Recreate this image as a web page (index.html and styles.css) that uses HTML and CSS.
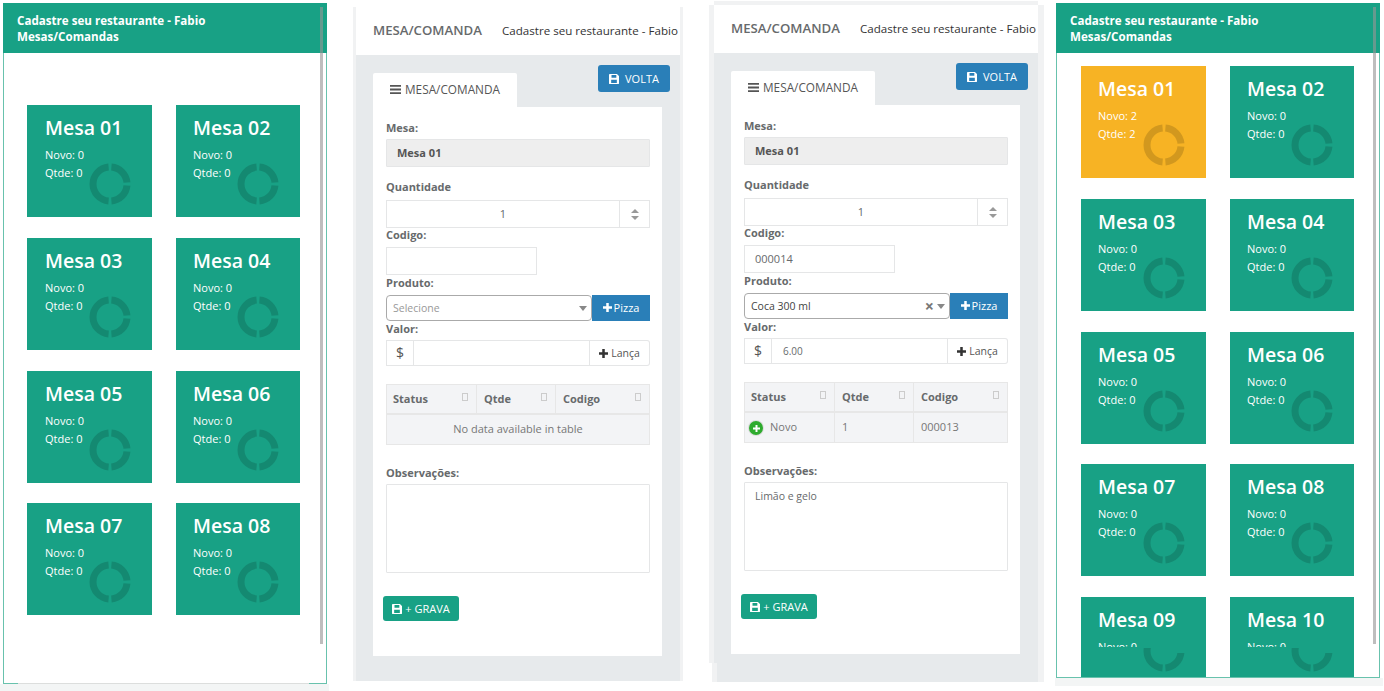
FILE: index.html
```html
<!DOCTYPE html>
<html lang="pt-BR">
<head>
<meta charset="utf-8">
<title>Mesas/Comandas</title>
<link rel="stylesheet" href="styles.css">
</head>
<body>
<svg class="defs" width="0" height="0" aria-hidden="true">
  <defs>
    <symbol id="ring" viewBox="0 0 42 42">
      <path d="M19.6 4.06A17 17 0 0 0 19.6 37.94M22.4 4.06A17 17 0 0 1 37.94 19.5M37.94 22.5A17 17 0 0 1 22.4 37.94" fill="none" stroke="currentColor" stroke-width="7"/>
    </symbol>
    <symbol id="save" viewBox="0 0 12 12">
      <path fill-rule="evenodd" d="M1 0H9.5L12 2.5V11a1 1 0 0 1-1 1H1a1 1 0 0 1-1-1V1a1 1 0 0 1 1-1ZM3 1.2V4.5H8.8V1.2ZM2.6 7V10.8H9.4V7Z" fill="currentColor"/>
    </symbol>
    <symbol id="plus" viewBox="0 0 10 10">
      <path d="M3.6 0H6.4V3.6H10V6.4H6.4V10H3.6V6.4H0V3.6H3.6Z" fill="currentColor"/>
    </symbol>
    <symbol id="bars" viewBox="0 0 11 9">
      <path d="M0 0H11V1.8H0ZM0 3.6H11V5.4H0ZM0 7.2H11V9H0Z" fill="currentColor"/>
    </symbol>
  </defs>
</svg>

<section class="phone list list-a">
  <header class="list-head">Cadastre seu restaurante - Fabio<br>Mesas/Comandas</header>
  <div class="cards">
    <article class="card"><h2>Mesa 01</h2><p>Novo: 0</p><p>Qtde: 0</p><svg class="ring"><use href="#ring"/></svg></article>
    <article class="card"><h2>Mesa 02</h2><p>Novo: 0</p><p>Qtde: 0</p><svg class="ring"><use href="#ring"/></svg></article>
    <article class="card"><h2>Mesa 03</h2><p>Novo: 0</p><p>Qtde: 0</p><svg class="ring"><use href="#ring"/></svg></article>
    <article class="card"><h2>Mesa 04</h2><p>Novo: 0</p><p>Qtde: 0</p><svg class="ring"><use href="#ring"/></svg></article>
    <article class="card"><h2>Mesa 05</h2><p>Novo: 0</p><p>Qtde: 0</p><svg class="ring"><use href="#ring"/></svg></article>
    <article class="card"><h2>Mesa 06</h2><p>Novo: 0</p><p>Qtde: 0</p><svg class="ring"><use href="#ring"/></svg></article>
    <article class="card"><h2>Mesa 07</h2><p>Novo: 0</p><p>Qtde: 0</p><svg class="ring"><use href="#ring"/></svg></article>
    <article class="card"><h2>Mesa 08</h2><p>Novo: 0</p><p>Qtde: 0</p><svg class="ring"><use href="#ring"/></svg></article>
  </div>
  <div class="scrollbar"></div>
  <div class="bottom-edge"></div>
</section>

<section class="phone form-phone form-a">
  <header class="top">
    <strong>MESA/COMANDA</strong>
    <span>Cadastre seu restaurante - Fabio</span>
  </header>
  <div class="body">
    <div class="tab-row">
      <div class="tab"><svg class="i-bars"><use href="#bars"/></svg>MESA/COMANDA</div>
      <button class="btn btn-blue volta"><svg class="i-save"><use href="#save"/></svg>VOLTA</button>
    </div>
    <div class="panel">
      <div class="label first">Mesa:</div>
      <div class="field readonly">Mesa 01</div>
      <div class="label tall">Quantidade</div>
      <div class="spin"><div class="spin-val">1</div><div class="spin-btn"><i class="up"></i><i class="down"></i></div></div>
      <div class="label codigo">Codigo:</div>
      <div class="field code"></div>
      <div class="label">Produto:</div>
      <div class="prod">
        <div class="select placeholder">Selecione<i class="caret"></i></div>
        <button class="btn-pizza"><svg class="i-plus"><use href="#plus"/></svg>Pizza</button>
      </div>
      <div class="label short">Valor:</div>
      <div class="money">
        <div class="dollar">$</div>
        <div class="money-in"></div>
        <button class="btn-lanca"><svg class="i-plus"><use href="#plus"/></svg>Lança</button>
      </div>
      <table class="grid">
        <thead><tr><th>Status<i class="sort"></i></th><th>Qtde<i class="sort"></i></th><th>Codigo<i class="sort"></i></th></tr></thead>
        <tbody><tr><td colspan="3" class="empty">No data available in table</td></tr></tbody>
      </table>
      <div class="label obs">Observações:</div>
      <div class="textarea"></div>
      <button class="btn btn-green grava"><svg class="i-save"><use href="#save"/></svg>+ GRAVA</button>
    </div>
  </div>
</section>

<section class="phone form-phone form-b">
  <header class="top">
    <strong>MESA/COMANDA</strong>
    <span>Cadastre seu restaurante - Fabio</span>
  </header>
  <div class="body">
    <div class="tab-row">
      <div class="tab"><svg class="i-bars"><use href="#bars"/></svg>MESA/COMANDA</div>
      <button class="btn btn-blue volta"><svg class="i-save"><use href="#save"/></svg>VOLTA</button>
    </div>
    <div class="panel">
      <div class="label first">Mesa:</div>
      <div class="field readonly">Mesa 01</div>
      <div class="label tall">Quantidade</div>
      <div class="spin"><div class="spin-val">1</div><div class="spin-btn"><i class="up"></i><i class="down"></i></div></div>
      <div class="label codigo">Codigo:</div>
      <div class="field code">000014</div>
      <div class="label">Produto:</div>
      <div class="prod">
        <div class="select">Coca 300 ml<b class="clear">×</b><i class="caret"></i></div>
        <button class="btn-pizza"><svg class="i-plus"><use href="#plus"/></svg>Pizza</button>
      </div>
      <div class="label short">Valor:</div>
      <div class="money">
        <div class="dollar">$</div>
        <div class="money-in">6.00</div>
        <button class="btn-lanca"><svg class="i-plus"><use href="#plus"/></svg>Lança</button>
      </div>
      <table class="grid">
        <thead><tr><th>Status<i class="sort"></i></th><th>Qtde<i class="sort"></i></th><th>Codigo<i class="sort"></i></th></tr></thead>
        <tbody><tr><td class="status"><span class="add"><svg class="i-add"><use href="#plus"/></svg></span>Novo</td><td>1</td><td>000013</td></tr></tbody>
      </table>
      <div class="label obs">Observações:</div>
      <div class="textarea">Limão e gelo</div>
      <button class="btn btn-green grava"><svg class="i-save"><use href="#save"/></svg>+ GRAVA</button>
    </div>
  </div>
</section>

<section class="phone list list-b">
  <header class="list-head">Cadastre seu restaurante - Fabio<br>Mesas/Comandas</header>
  <div class="cards">
    <article class="card busy"><h2>Mesa 01</h2><p>Novo: 2</p><p>Qtde: 2</p><svg class="ring"><use href="#ring"/></svg></article>
    <article class="card"><h2>Mesa 02</h2><p>Novo: 0</p><p>Qtde: 0</p><svg class="ring"><use href="#ring"/></svg></article>
    <article class="card"><h2>Mesa 03</h2><p>Novo: 0</p><p>Qtde: 0</p><svg class="ring"><use href="#ring"/></svg></article>
    <article class="card"><h2>Mesa 04</h2><p>Novo: 0</p><p>Qtde: 0</p><svg class="ring"><use href="#ring"/></svg></article>
    <article class="card"><h2>Mesa 05</h2><p>Novo: 0</p><p>Qtde: 0</p><svg class="ring"><use href="#ring"/></svg></article>
    <article class="card"><h2>Mesa 06</h2><p>Novo: 0</p><p>Qtde: 0</p><svg class="ring"><use href="#ring"/></svg></article>
    <article class="card"><h2>Mesa 07</h2><p>Novo: 0</p><p>Qtde: 0</p><svg class="ring"><use href="#ring"/></svg></article>
    <article class="card"><h2>Mesa 08</h2><p>Novo: 0</p><p>Qtde: 0</p><svg class="ring"><use href="#ring"/></svg></article>
    <article class="card cut"><h2>Mesa 09</h2><p>Novo: 0</p><svg class="ring"><use href="#ring"/></svg></article>
    <article class="card cut"><h2>Mesa 10</h2><p>Novo: 0</p><svg class="ring"><use href="#ring"/></svg></article>
  </div>
  <div class="scrollbar"></div>
</section>
</body>
</html>
```
FILE: styles.css
```css
* { box-sizing: border-box; }
html, body { margin: 0; padding: 0; }
body {
  position: relative;
  width: 1384px;
  height: 691px;
  overflow: hidden;
  background: #fff;
  font-family: "Open Sans", "Liberation Sans", sans-serif;
  font-size: 11px;
  color: #676a6c;
}
.defs { position: absolute; }
.phone { position: absolute; }

/* list phones */
.list { background: #fff; border: 1px solid #68c2ad; }
.list::after { content: ""; position: absolute; top: 100%; height: 8px; background: #f3f5f5; }
.list-a { left: 3px; top: 3px; width: 324px; height: 681px; }
.list-a::after { left: -4px; right: -3px; margin-top: 1px; }
.list-b { left: 1056px; top: 3px; width: 324px; height: 675px; }
.list-b::after { left: -2px; right: -4px; margin-top: 1px; }
.list-head {
  height: 50px;
  margin: -1px -1px 0;
  padding: 10px 14px 0;
  background: #18a185;
  color: #fff;
  font-size: 11.6px;
  font-weight: 700;
  line-height: 16px;
}
.cards {
  display: grid;
  grid-template-columns: 125px 124px;
  grid-auto-rows: 112px;
  column-gap: 24px;
  row-gap: 20.75px;
  overflow: hidden;
}
.list-a .cards { height: 620px; padding: 52px 0 0 23px; }
.list-b .cards { height: 624px; padding: 13px 0 0 24px; }
.card {
  position: relative;
  overflow: hidden;
  padding: 11px 0 0 17px;
  background: #18a185;
  color: #fff;
}
.list-a .card:nth-child(odd) { padding-left: 18px; }
.card.busy { background: #f7b324; }
.card h2 { margin: 0 0 6px; font-size: 19.5px; font-weight: 600; line-height: 24px; }
.card p { margin: 0; font-size: 11px; line-height: 18px; }
.cut p { height: 9px; overflow: hidden; }
.ring { position: absolute; right: 21px; bottom: 12px; width: 42px; height: 42px; color: rgba(0, 0, 0, .15); }
.cut .ring { top: 33px; bottom: auto; clip-path: polygon(0 18px, 21px 18px, 21px 23px, 100% 23px, 100% 100%, 0 100%); }
.scrollbar { position: absolute; right: 3px; top: 3px; width: 3px; height: 637px; background: rgba(150, 150, 150, .62); }
.bottom-edge { position: absolute; left: 14px; right: 17px; bottom: -1px; height: 1px; background: #dcdedd; }

/* form phones */
.form-phone { width: 324px; background: #e7eaec; }
.form-a { left: 356px; top: 7px; height: 674px; box-shadow: -3px 0 0 #f1f2f3, 3px 0 0 #f1f2f3; }
.form-b { left: 714px; top: 5px; height: 677px; box-shadow: -5px 0 0 #f1f2f3, 6px 0 0 #f1f2f3, 0 -4px 0 #f1f2f3; }
.form-b::before {
  content: "";
  position: absolute;
  left: -5px;
  bottom: 0;
  width: 8px;
  height: 19px;
  background: linear-gradient(90deg, #fff 3px, #f1f2f3 3px);
}
.top {
  display: flex;
  align-items: center;
  height: 48px;
  padding-left: 17px;
  padding-bottom: 2px;
  background: #fff;
  overflow: hidden;
  white-space: nowrap;
}
.top strong { font-size: 13.2px; font-weight: 600; color: #676a6c; }
.top span { margin-left: 20px; font-size: 11.6px; color: #333; }
.body { padding: 10px 18px 0 17px; }
.tab-row { display: flex; align-items: flex-start; justify-content: space-between; height: 42px; margin-right: -8px; }
.tab {
  display: flex;
  align-items: center;
  width: 144px;
  height: 34px;
  margin-top: 8px;
  padding: 0 0 2px 17px;
  background: #fff;
  border-radius: 2px 2px 0 0;
  font-size: 11.8px;
  color: #555;
  white-space: nowrap;
}
.i-bars { width: 11px; height: 9px; margin-right: 4px; color: #555; }
.btn {
  display: flex;
  align-items: center;
  justify-content: center;
  border: 0;
  border-radius: 3px;
  color: #fff;
  font-family: inherit;
  font-size: 11px;
  padding: 0;
}
.btn-blue { background: #2a7fb8; }
.btn-green { background: #18a185; }
.volta { width: 72px; height: 27px; }
.i-save { width: 10px; height: 10px; margin-right: 6px; }
.panel { height: 549px; padding: 15px 12px 0 13px; background: #fff; }
.label { height: 12px; font-weight: 700; font-size: 11px; line-height: 12px; margin: 2px 0 6px; white-space: nowrap; }
.label.first { margin: 0 0 5px; }
.label.tall { margin: 14px 0 7px; }
.label.codigo { margin: 1px 0 6px; }
.label.short { margin: 2px 0 5px; }
.label.obs { margin: 22px 0 5px; }
.field { height: 28px; border: 1px solid #e5e6e7; padding: 0 10px; line-height: 26px; font-size: 11px; }
.readonly { background: #eee; font-weight: 700; color: #555; border-radius: 1px; }
.code { width: 151px; }
.spin { display: flex; height: 28px; border: 1px solid #e5e6e7; }
.spin-val { flex: 1; text-align: center; line-height: 26px; font-size: 11px; }
.spin-btn { display: flex; flex-direction: column; align-items: center; justify-content: center; gap: 3px; width: 30px; border-left: 1px solid #e5e6e7; }
.up, .down { display: block; width: 0; height: 0; border-left: 4px solid transparent; border-right: 4px solid transparent; }
.up { border-bottom: 4px solid #999; }
.down { border-top: 4px solid #999; }
.prod { display: flex; height: 26px; }
.select {
  position: relative;
  width: 206px;
  padding-left: 6px;
  border: 1px solid #aaa;
  border-radius: 4px;
  line-height: 24px;
  font-size: 10.5px;
  color: #444;
}
.placeholder { color: #999; }
.caret { position: absolute; right: 4px; top: 10px; width: 0; height: 0; border-left: 4px solid transparent; border-right: 4px solid transparent; border-top: 5px solid #888; }
.clear { position: absolute; right: 15px; top: 0; font-size: 16px; font-weight: 700; color: #777; }
.btn-pizza {
  display: flex;
  align-items: center;
  justify-content: center;
  width: 58px;
  padding: 0 0 1px;
  border: 0;
  background: #2a7fb8;
  color: #fff;
  font-family: inherit;
  font-size: 11px;
}
.i-plus { width: 9px; height: 9px; margin-right: 2px; }
.money { display: flex; height: 26px; }
.dollar { width: 27px; height: 26px; border: 1px solid #e5e6e7; border-right: 0; text-align: center; font-size: 14px; font-weight: 500; line-height: 24px; color: #555; }
.money-in { flex: 1; border: 1px solid #e5e6e7; padding-left: 11px; line-height: 24px; font-size: 10px; }
.btn-lanca {
  display: flex;
  align-items: center;
  justify-content: center;
  width: 60px;
  padding: 0;
  background: #fff;
  border: 1px solid #e5e6e7;
  border-left: 0;
  border-radius: 0 3px 3px 0;
  color: #555;
  font-family: inherit;
  font-size: 10.5px;
}
.btn-lanca .i-plus { color: #333; margin-right: 3px; }
.grid {
  width: 264px;
  height: 61px;
  margin-top: 18px;
  border-collapse: collapse;
  table-layout: fixed;
  background: #f3f4f6;
  font-size: 11px;
  color: #777;
}
.grid th {
  position: relative;
  height: 29px;
  padding: 0 7px;
  border: 1px solid #e7e7e7;
  border-bottom-width: 2px;
  text-align: left;
  font-weight: 700;
  color: #676a6c;
}
.grid th:nth-child(1) { width: 90px; padding-left: 6px; }
.grid th:nth-child(2) { width: 79px; }
.grid td { height: 31px; padding: 0 7px 2px; border: 1px solid #e7e7e7; }
.sort { position: absolute; right: 8px; top: 8px; width: 6px; height: 8px; border: 1px solid #ccc; }
.empty { text-align: center; }
.grid .status { padding: 0 6px; white-space: nowrap; }
.add {
  display: inline-flex;
  align-items: center;
  justify-content: center;
  width: 14px;
  height: 14px;
  margin: 0 7px 0 -2px;
  border-radius: 50%;
  background: #2eab2e;
  box-shadow: 0 0 0 1px #ddd;
  vertical-align: middle;
}
.i-add { width: 7px; height: 7px; margin: 0; color: #fff; }
.textarea { height: 89px; border: 1px solid #e5e6e7; border-radius: 1px; padding: 6px 10px; font-size: 10.5px; line-height: 14px; }
.grava { width: 76px; height: 25px; margin: 23px 0 0 -3px; }
.grava .i-save { margin-right: 3px; }
```
